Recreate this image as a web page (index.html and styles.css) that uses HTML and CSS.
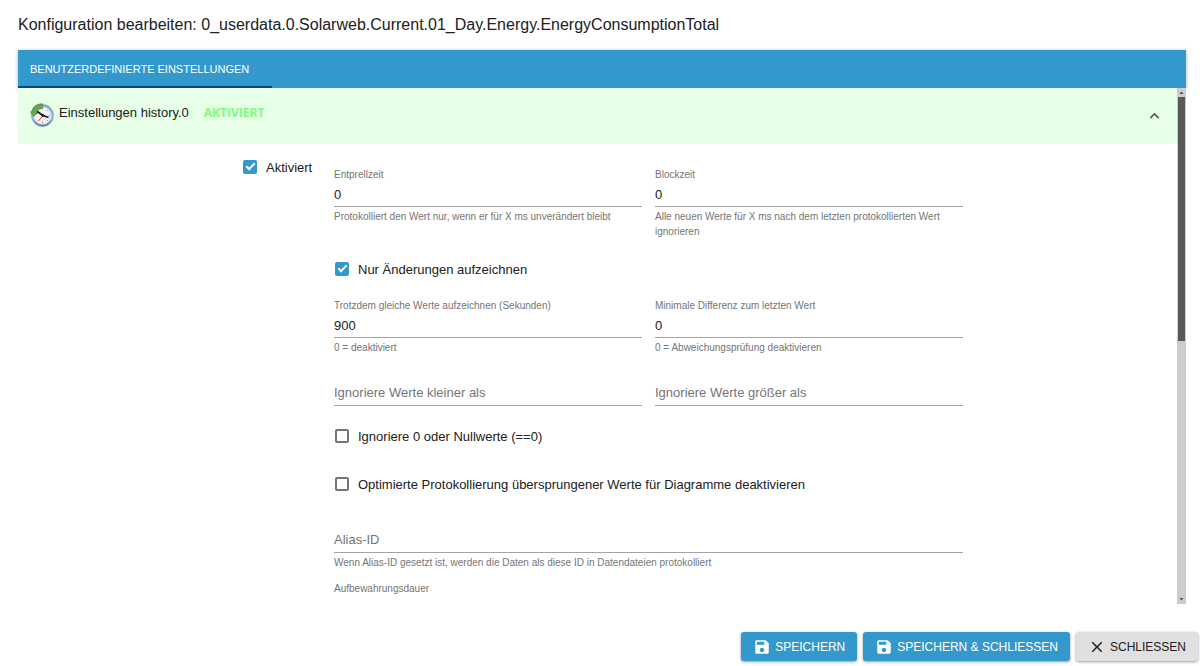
FILE: index.html
```html
<!DOCTYPE html>
<html lang="de">

<head>
    <meta charset="UTF-8">
    <meta name="viewport" content="width=device-width, initial-scale=1.0">
    <title>Konfiguration bearbeiten</title>

    <link rel="stylesheet" href="styles.css">

</head>
<body>

    <h1 class="title">Konfiguration bearbeiten: 0_userdata.0.Solarweb.Current.01_Day.Energy.EnergyConsumptionTotal</h1>

    <main class="panel">
        <div class="tabs" role="tablist">
            <button type="button" class="tab" role="tab" aria-selected="true">BENUTZERDEFINIERTE EINSTELLUNGEN</button>
        </div>

        <div class="panel-body">
            <div class="content">
                <button type="button" class="accordion" id="accordion" aria-expanded="true">
                    <svg class="history-icon" viewBox="0 0 24 24">
                        <defs>
                            <linearGradient id="rim" x1="0" y1="0" x2="0" y2="1">
                                <stop offset="0" stop-color="#7d9fd0"/>
                                <stop offset="0.6" stop-color="#9dbde8"/>
                                <stop offset="1" stop-color="#66788f"/>
                            </linearGradient>
                        </defs>
                        <circle cx="12.5" cy="12.5" r="11" fill="url(#rim)" stroke="#7b90ad" stroke-width="0.6"/>
                        <circle cx="12.5" cy="12.5" r="8.8" fill="#f1f2f4" stroke="#c9d4e4" stroke-width="0.8"/>
                        <path d="M12.5 18.6v1.8M18.8 12.5h1.6M17 17l1 1M17.2 8l1-1" stroke="#999" stroke-width="1"/>
                        <path d="M12.6 0.8C6.4 0.6 2.4 4 1.8 8.6L0.4 8.8l3 4.6 5.4-4.2-1.4-0.4c0.6-2 2.6-3.2 5.2-3.2z" fill="#69a455" stroke="#4b853b" stroke-width="0.6"/>
                        <path d="M12.7 13.2l-4.6 5" stroke="#ee2a2a" stroke-width="1"/>
                        <path d="M7.2 8.4l5.4 3.9 6 2.2" fill="none" stroke="#1c1c1c" stroke-width="1.8"/>
                        <circle cx="12.8" cy="12.5" r="1.4" fill="#1c1c1c"/>
                    </svg>
                    <span>Einstellungen history.0</span>
                    <span class="state">AKTIVIERT</span>
                    <svg class="chevron" viewBox="0 0 24 24"><path d="M12 8l-6 6 1.41 1.41L12 10.83l4.59 4.58L18 14z" fill="#555"/></svg>
                </button>

                <form class="settings" id="settings">
                    <label class="check enabled"><input type="checkbox" checked>Aktiviert</label>

                    <div class="fields">
                        <div class="row">
                            <div class="field">
                                <label for="debounce">Entprellzeit</label>
                                <input type="text" id="debounce" value="0">
                                <p class="help">Protokolliert den Wert nur, wenn er für X ms unverändert bleibt</p>
                            </div>
                            <div class="field">
                                <label for="block">Blockzeit</label>
                                <input type="text" id="block" value="0">
                                <p class="help">Alle neuen Werte für X ms nach dem letzten protokollierten Wert ignorieren</p>
                            </div>
                        </div>

                        <label class="check"><input type="checkbox" checked>Nur Änderungen aufzeichnen</label>

                        <div class="row">
                            <div class="field">
                                <label for="relog">Trotzdem gleiche Werte aufzeichnen (Sekunden)</label>
                                <input type="text" id="relog" value="900">
                                <p class="help">0 = deaktiviert</p>
                            </div>
                            <div class="field">
                                <label for="mindelta">Minimale Differenz zum letzten Wert</label>
                                <input type="text" id="mindelta" value="0">
                                <p class="help">0 = Abweichungsprüfung deaktivieren</p>
                            </div>
                        </div>

                        <div class="row close">
                            <div class="field empty">
                                <label for="below">Ignoriere Werte kleiner als</label>
                                <input type="text" id="below">
                            </div>
                            <div class="field empty">
                                <label for="above">Ignoriere Werte größer als</label>
                                <input type="text" id="above">
                            </div>
                        </div>

                        <label class="check"><input type="checkbox">Ignoriere 0 oder Nullwerte (==0)</label>
                        <label class="check wide"><input type="checkbox">Optimierte Protokollierung übersprungener Werte für Diagramme deaktivieren</label>

                        <div class="row">
                            <div class="field empty">
                                <label for="alias">Alias-ID</label>
                                <input type="text" id="alias">
                                <p class="help">Wenn Alias-ID gesetzt ist, werden die Daten als diese ID in Datendateien protokolliert</p>
                            </div>
                        </div>

                        <div class="row close">
                            <div class="field">
                                <label for="retention">Aufbewahrungsdauer</label>
                                <input type="text" id="retention">
                            </div>
                        </div>
                    </div>
                </form>
            </div>

            <div class="scrollbar" aria-hidden="true">
                <svg viewBox="0 0 9 9"><path d="M2.5 6h4l-2-2.5z" fill="#505050"/></svg>
                <div class="track"><div class="thumb"></div></div>
                <svg viewBox="0 0 9 9"><path d="M2.5 3h4l-2 2.5z" fill="#505050"/></svg>
            </div>
        </div>
    </main>

    <footer class="actions">
        <button type="button" class="btn primary">
            <svg viewBox="0 0 24 24"><path fill="currentColor" d="M17 3H5c-1.11 0-2 .9-2 2v14c0 1.1.89 2 2 2h14c1.1 0 2-.9 2-2V7zm-5 16c-1.66 0-3-1.34-3-3s1.34-3 3-3 3 1.34 3 3-1.34 3-3 3m3-10H5V5h10z"/></svg>
            SPEICHERN
        </button>
        <button type="button" class="btn primary">
            <svg viewBox="0 0 24 24"><path fill="currentColor" d="M17 3H5c-1.11 0-2 .9-2 2v14c0 1.1.89 2 2 2h14c1.1 0 2-.9 2-2V7zm-5 16c-1.66 0-3-1.34-3-3s1.34-3 3-3 3 1.34 3 3-1.34 3-3 3m3-10H5V5h10z"/></svg>
            SPEICHERN &amp; SCHLIESSEN
        </button>
        <button type="button" class="btn">
            <svg viewBox="0 0 24 24"><path fill="currentColor" d="M19 6.41 17.59 5 12 10.59 6.41 5 5 6.41 10.59 12 5 17.59 6.41 19 12 13.41 17.59 19 19 17.59 13.41 12z"/></svg>
            SCHLIESSEN
        </button>
    </footer>

    <script>
        // Open and close the settings block
        document.getElementById("accordion").addEventListener("click", function () {
            let form = document.getElementById("settings");
            form.hidden = !form.hidden;
            this.setAttribute("aria-expanded", String(!form.hidden));
        });
    </script>

</body>
</html>
```

FILE: styles.css
```css
* {
    box-sizing: border-box;
}

body {
    display: flex;
    flex-direction: column;
    height: 100vh;
    margin: 0;
    background-color: white;
    color: #212121;
    font-family: "Liberation Sans", Arial, sans-serif;
    font-size: 13px;
}

button,
input {
    font: inherit;
    color: inherit;
}

button {
    border: none;
    cursor: pointer;
}

.title {
    margin: 0;
    padding: 15px 18px;
    font-size: 16px;
    font-weight: normal;
    line-height: 20px;
}

.panel {
    display: flex;
    flex: 1;
    flex-direction: column;
    min-height: 0;
    margin: 0 14px 0 18px;
}

.tabs {
    flex: none;
    background-color: #3399cc;
    box-shadow: 0 1px 4px rgba(0, 0, 0, 0.3);
}

.tab {
    min-width: 254px;
    height: 38px;
    padding: 2px 12px 0;
    background: none;
    border-bottom: 2px solid #164477;
    color: white;
    font-size: 11px;
    text-align: left;
}

.panel-body {
    display: flex;
    flex: 1;
    min-height: 0;
    z-index: 1;
}

.content {
    flex: 1;
    overflow-y: auto;
    scrollbar-width: none;
    background-color: white;
}

.accordion {
    display: flex;
    align-items: flex-start;
    width: 100%;
    height: 56px;
    padding: 15px 13px 0 12px;
    background-color: #e6ffe6;
    line-height: 20px;
    text-align: left;
}

.history-icon {
    width: 24px;
    height: 24px;
    margin-right: 5px;
}

.state {
    margin-left: 15px;
    color: #7cfc7c;
    font-family: "Open Sans", "Noto Sans", sans-serif;
    font-size: 12px;
    font-weight: bold;
}

.chevron {
    width: 19px;
    height: 26px;
    margin-left: auto;
}

.settings {
    display: flex;
    align-items: flex-start;
    max-width: 731px;
    margin: 0 auto;
    padding: 11px 0 11px 11px;
}

.settings[hidden] {
    display: none;
}

.fields {
    flex: 1;
    min-width: 0;
    padding-top: 13px;
}

.row {
    display: flex;
    gap: 13px;
}

.row,
.check {
    margin-top: 18px;
}

.close {
    margin-top: 12px;
}

.wide {
    margin-top: 24px;
}

.enabled,
.row:first-child {
    margin-top: 0;
}

.enabled {
    flex: none;
    width: 91px;
}

.check {
    display: flex;
    align-items: center;
    gap: 9px;
    height: 24px;
}

.fields .check {
    padding-left: 1px;
}

.check input {
    display: grid;
    place-items: center;
    appearance: none;
    width: 14px;
    height: 14px;
    margin: 0;
    border: 2px solid #757575;
    border-radius: 2px;
}

.check input:checked {
    background-color: #3399cc;
    border-color: #3399cc;
}

.check input:checked::before {
    content: "";
    box-sizing: border-box;
    width: 9px;
    height: 5px;
    margin-bottom: 3px;
    border-left: 2px solid white;
    border-bottom: 2px solid white;
    transform: rotate(-45deg);
}

.field {
    display: grid;
    flex: 1;
    grid-template-rows: 14px 25px;
    align-content: start;
    min-width: 0;
}

.field label {
    color: #757575;
    font-size: 10px;
    line-height: 14px;
}

.field input {
    width: 100%;
    padding: 0;
    background: none;
    border: none;
    border-bottom: 1px solid #a3a3a3;
    outline: none;
}

.field input:focus {
    border-color: #3399cc;
}

.empty label {
    grid-area: 2 / 1;
    font-size: 13px;
    line-height: 24px;
}

.empty input {
    grid-area: 2 / 1;
}

.help {
    grid-row: 3;
    margin: 2px 0 0;
    color: #757575;
    font-size: 10px;
    line-height: 15px;
}

.scrollbar {
    display: flex;
    flex: none;
    flex-direction: column;
    width: 9px;
    background-color: #cdcdcd;
}

.scrollbar svg {
    width: 9px;
    height: 9px;
}

.track {
    flex: 1;
    padding: 0 1px;
}

.thumb {
    height: 49%;
    background-color: #585858;
}

.actions {
    display: flex;
    flex-wrap: wrap;
    justify-content: flex-end;
    gap: 6px;
    padding: 28px 2px 5px;
}

.btn {
    display: flex;
    align-items: center;
    gap: 4px;
    height: 29px;
    padding: 0 12px;
    background-color: #e0e0e0;
    border-radius: 3px;
    box-shadow: 0 1px 3px rgba(0, 0, 0, 0.4);
    font-size: 12px;
}

.primary {
    background-color: #3399cc;
    color: white;
}

.btn svg {
    width: 18px;
    height: 18px;
}
```
